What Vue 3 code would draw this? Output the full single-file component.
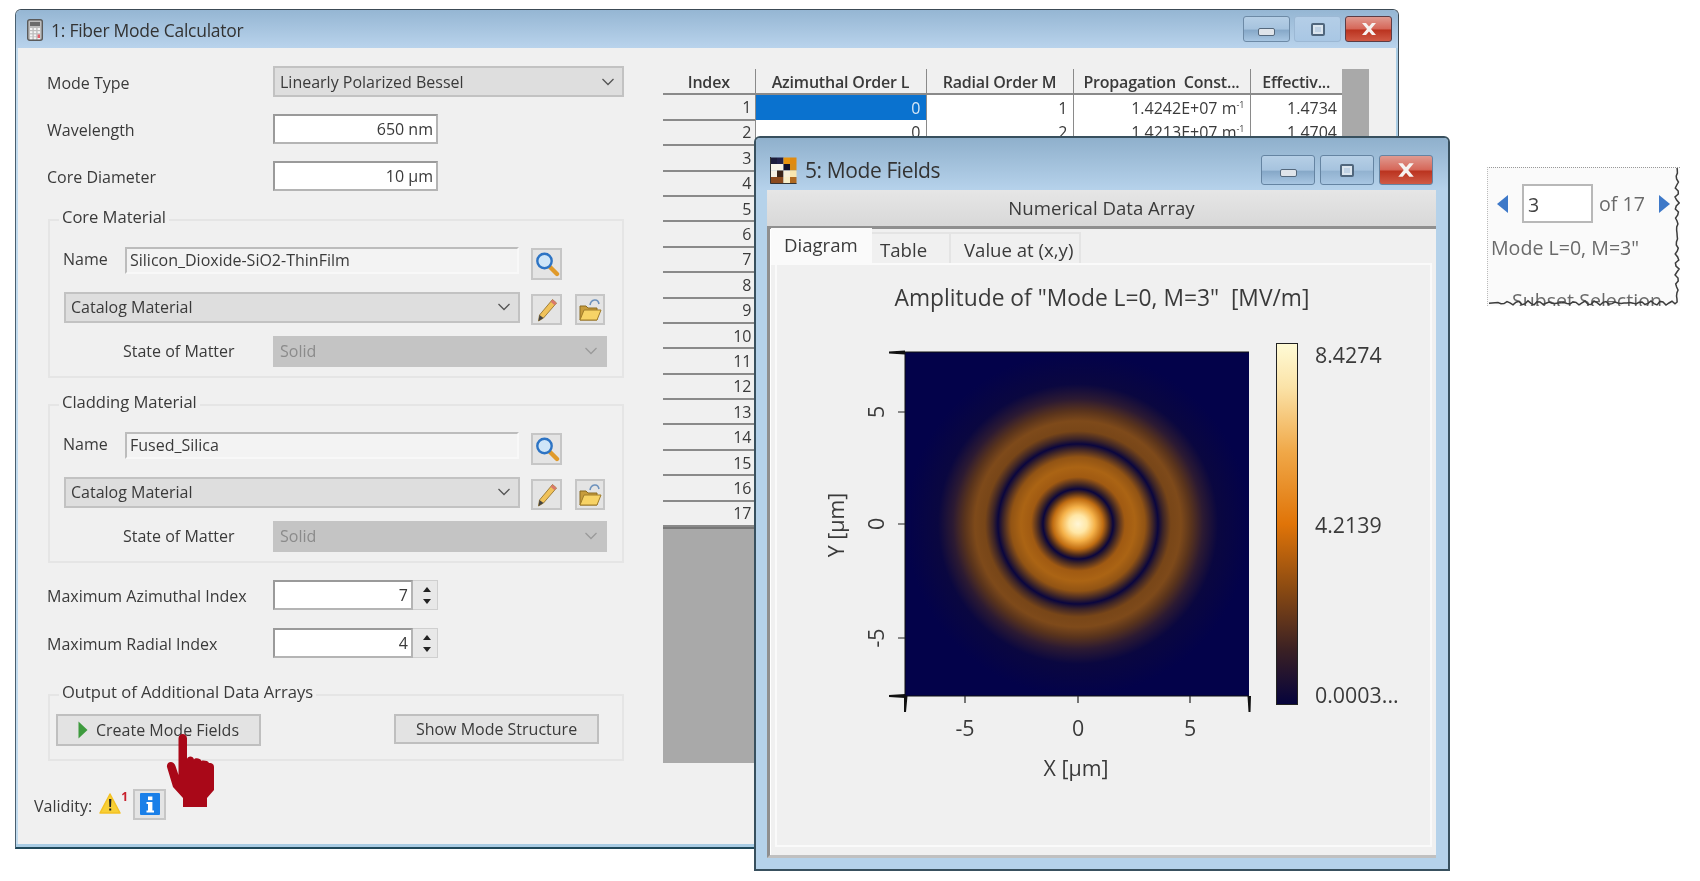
<template>
  <div class="desk">
    <!-- main calculator window -->
    <section class="win calc">
      <header class="titlebar">
        <svg class="calc-icon" width="16" height="22" viewBox="0 0 16 22">
          <rect x="0.7" y="0.7" width="14.6" height="20.6" rx="2" fill="#bdbdbd" stroke="#5a5a5a" stroke-width="1.4" />
          <rect x="3" y="3" width="10" height="4" fill="#6b6b6b" />
          <g fill="#f4f4f4">
            <rect v-for="k in calcKeys" :key="k.x + '-' + k.y" :x="k.x" :y="k.y" width="2.4" height="2" />
          </g>
          <rect x="10.6" y="15.4" width="2.4" height="3.6" fill="#e2606a" />
        </svg>
        <span class="title">1: Fiber Mode Calculator</span>
        <div class="winbtns">
          <button class="wb min"><i class="glyph-min"></i></button>
          <button class="wb max"><i class="glyph-max"></i></button>
          <button class="wb close">
            <svg width="18" height="14" viewBox="0 0 18 14"><path d="M2 1 H6 L9 4.6 L12 1 H16 L11 7 L16 13 H12 L9 9.4 L6 13 H2 L7 7 Z" fill="#f6f2f0" /></svg>
          </button>
        </div>
      </header>
      <div class="calc-body">
        <form class="form" @submit.prevent>
          <div class="row first">
            <label>Mode Type</label>
            <div class="combo wide"><span>Linearly Polarized Bessel</span><svg class="chev" width="14" height="8" viewBox="0 0 14 8"><path d="M1.5 1 L7 6.5 L12.5 1" fill="none" stroke="#555" stroke-width="1.3" /></svg></div>
          </div>
          <div class="row">
            <label>Wavelength</label>
            <div class="num">650 nm</div>
          </div>
          <div class="row">
            <label>Core Diameter</label>
            <div class="num">10 µm</div>
          </div>

          <div v-for="m in materials" :key="m.legend" class="group material">
            <div class="legend">{{ m.legend }}</div>
            <div class="name-row">
              <label>Name</label>
              <div class="name-input">{{ m.name }}</div>
              <button class="ico search">
                <svg width="26" height="26" viewBox="0 0 26 26">
                  <path d="M15 15 L23 23" stroke="#e09a2a" stroke-width="4.4" stroke-linecap="round" />
                  <circle cx="10.5" cy="10" r="7.2" fill="#cfe6f8" stroke="#2d74c4" stroke-width="2.4" />
                </svg>
              </button>
            </div>
            <div class="cat-row">
              <div class="combo cat"><span>Catalog Material</span><svg class="chev" width="14" height="8" viewBox="0 0 14 8"><path d="M1.5 1 L7 6.5 L12.5 1" fill="none" stroke="#555" stroke-width="1.3" /></svg></div>
              <button class="ico pencil">
                <svg width="24" height="26" viewBox="0 0 24 26">
                  <path d="M3.5 24 L4.5 18 L17.5 2.5 L21.5 6 L8.5 21 Z" fill="#f0c25a" stroke="#8a6a24" stroke-width="0.8" />
                  <path d="M3.5 24 L4.5 18 L8.5 21 Z" fill="#444" />
                  <path d="M17.5 2.5 L21.5 6 L19.6 8.2 L15.6 4.8 Z" fill="#d9796c" />
                </svg>
              </button>
              <button class="ico folder">
                <svg width="26" height="26" viewBox="0 0 26 26">
                  <path d="M3 23 V9 H9 L11 11 H20 V23 Z" fill="#c79c3c" stroke="#8b6a20" />
                  <path d="M3 23 L7 13 H24 L20 23 Z" fill="#f7d366" stroke="#a07c28" />
                  <path d="M13 8 C14 2 21 1 22 7" fill="none" stroke="#6d92bd" stroke-width="1.6" />
                </svg>
              </button>
            </div>
            <div class="state-row">
              <label>State of Matter</label>
              <div class="combo off"><span>Solid</span><svg class="chev" width="14" height="8" viewBox="0 0 14 8"><path d="M1.5 1 L7 6.5 L12.5 1" fill="none" stroke="#9a9a9a" stroke-width="1.3" /></svg></div>
            </div>
          </div>

          <div v-for="(s, i) in spinners" :key="s.label" class="row spin-row" :class="{ second: i === 1 }">
            <label>{{ s.label }}</label>
            <div class="num spin-num">{{ s.value }}</div>
            <div class="spin">
              <svg width="10" height="7" viewBox="0 0 10 7"><path d="M5 1 L9 6 H1 Z" fill="#222" /></svg>
              <svg width="10" height="7" viewBox="0 0 10 7"><path d="M5 6 L9 1 H1 Z" fill="#222" /></svg>
            </div>
          </div>

          <div class="group output">
            <div class="legend">Output of Additional Data Arrays</div>
            <button class="btn create">
              <svg width="10" height="18" viewBox="0 0 10 18"><path d="M0.5 0.5 L9.5 9 L0.5 17.5 Z" fill="#3d9a3d" /></svg>
              Create Mode Fields
            </button>
            <button class="btn show">Show Mode Structure</button>
          </div>

          <div class="validity">
            <span>Validity:</span>
            <svg class="warn" width="24" height="24" viewBox="0 0 24 24">
              <path d="M11 3 L21 22 H1 Z" fill="#f8cf35" stroke="#f3c123" stroke-width="1.5" stroke-linejoin="round" />
              <path d="M10 8 H12.4 L12 16 H10.4 Z M10.2 17.4 H12.2 V19.6 H10.2 Z" fill="#222" />
            </svg>
            <sup class="warn-count">1</sup>
            <button class="ico info">
              <svg width="22" height="24" viewBox="0 0 22 24">
                <rect x="1" y="1" width="20" height="22" rx="1" fill="#1a7fe8" />
                <rect x="9" y="4.5" width="4.4" height="3.6" fill="#fff" />
                <path d="M7.5 10 H13.4 V18.5 H15 V20.5 H7.5 V18.5 H9 V12 H7.5 Z" fill="#fff" />
              </svg>
            </button>
          </div>
        </form>

        <div class="grid-wrap">
          <div class="grid">
            <div class="grid-table">
              <table>
                <colgroup>
                  <col v-for="c in columns" :key="c.label" :style="{ width: c.width + 'px' }" />
                </colgroup>
                <thead>
                  <tr><th v-for="c in columns" :key="c.label">{{ c.label }}</th></tr>
                </thead>
                <tbody>
                  <tr v-for="r in rows" :key="r.index">
                    <th>{{ r.index }}</th>
                    <td :class="{ sel: r.index === 1 }">{{ r.l }}</td>
                    <td>{{ r.m }}</td>
                    <td>{{ r.beta }}<sup v-if="r.beta">-1</sup></td>
                    <td>{{ r.neff }}</td>
                  </tr>
                </tbody>
              </table>
              <div class="grid-empty"></div>
            </div>
            <div class="scroll"></div>
          </div>
        </div>
      </div>
    </section>

    <!-- result window, sits over the table -->
    <section class="win fields">
      <header class="titlebar tall">
        <svg class="checker" width="27" height="27" viewBox="0 0 27 27">
          <rect v-for="c in checker" :key="c.x + '-' + c.y" :x="c.x * 6.5 + 0.5" :y="c.y * 6.5 + 0.5" width="6.5" height="6.5" :fill="c.fill" />
          <path d="M0.5 0 V26.5 H26.5" fill="none" stroke="#333" />
        </svg>
        <span class="title big">5: Mode Fields</span>
        <div class="winbtns big">
          <button class="wb min"><i class="glyph-min"></i></button>
          <button class="wb max"><i class="glyph-max"></i></button>
          <button class="wb close">
            <svg width="20" height="16" viewBox="0 0 18 14"><path d="M2 1 H6 L9 4.6 L12 1 H16 L11 7 L16 13 H12 L9 9.4 L6 13 H2 L7 7 Z" fill="#f6f2f0" /></svg>
          </button>
        </div>
      </header>
      <div class="fields-body">
        <div class="band">Numerical Data Array</div>
        <div class="tabs-frame">
          <div class="tabs">
            <div class="tab on">Diagram</div>
            <div class="tab t-table">Table</div>
            <div class="tab t-value">Value at (x,y)</div>
          </div>
          <div class="tab-panel">
            <svg class="plot" width="653" height="580" viewBox="777 265 653 580">
              <defs>
                <radialGradient id="field" gradientUnits="userSpaceOnUse" cx="1078" cy="524" r="172">
                  <stop v-for="s in fieldStops" :key="s.r" :offset="s.r / 172" :stop-color="s.c" />
                </radialGradient>
                <linearGradient id="scale" x1="0" y1="0" x2="0" y2="1">
                  <stop v-for="s in scaleStops" :key="s.o" :offset="s.o" :stop-color="s.c" />
                </linearGradient>
              </defs>
              <text class="t-title" x="1102" y="306" text-anchor="middle">Amplitude of "Mode L=0, M=3"&#160;&#160;[MV/m]</text>
              <rect x="905" y="352" width="344" height="344" fill="url(#field)" />
              <path d="M905 352 H1249 M905 352 V696 H1249" fill="none" stroke="#111" stroke-width="1" />
              <!-- ticks, the corner ones are longer and taper -->
              <g stroke="#222">
                <path v-for="t in xTicks" :key="t.x" :d="`M${t.x} 696 V703`" stroke-width="1.2" />
                <path v-for="t in yTicks" :key="t.y" :d="`M905 ${t.y} H898`" stroke-width="1.2" />
              </g>
              <g fill="#111">
                <path d="M904 696 H907.5 L906 712 H904 Z M1247.5 696 H1251 L1250.5 712 H1248.5 Z" />
                <path d="M905 350.5 V354.5 L889 353.5 V351.5 Z M905 694 V698 L889 697 V695 Z" />
              </g>
              <g class="t-axis">
                <text x="965" y="736" text-anchor="middle">-5</text>
                <text x="1078" y="736" text-anchor="middle">0</text>
                <text x="1190" y="736" text-anchor="middle">5</text>
                <text x="1076" y="776" text-anchor="middle">X [µm]</text>
                <text transform="translate(884 412) rotate(-90)" text-anchor="middle">5</text>
                <text transform="translate(884 524) rotate(-90)" text-anchor="middle">0</text>
                <text transform="translate(884 638) rotate(-90)" text-anchor="middle">-5</text>
                <text transform="translate(844 525) rotate(-90)" text-anchor="middle">Y [µm]</text>
              </g>
              <rect x="1276.5" y="343.5" width="21" height="361" fill="url(#scale)" stroke="#222" stroke-width="1" />
              <g class="t-axis">
                <text x="1315" y="363">8.4274</text>
                <text x="1315" y="533">4.2139</text>
                <text x="1315" y="703">0.0003...</text>
              </g>
            </svg>
          </div>
        </div>
      </div>
    </section>

    <!-- clipped ribbon piece -->
    <aside class="subset">
      <div class="subset-top">
        <svg width="13" height="20" viewBox="0 0 13 20"><path d="M12 1 V19 L1 10 Z" fill="#3d78c8" /></svg>
        <div class="subset-input">3</div>
        <span>of 17</span>
        <svg class="next" width="13" height="20" viewBox="0 0 13 20"><path d="M1 1 V19 L12 10 Z" fill="#3d78c8" /></svg>
      </div>
      <div class="subset-name">Mode L=0, M=3"</div>
      <div class="subset-cap">Subset Selection</div>
      <svg class="torn" width="193" height="139" viewBox="0 0 193 139">
        <path :d="tornEdge" fill="none" stroke="#3c3c3c" stroke-width="1.5" />
      </svg>
    </aside>

    <!-- pointer over the button -->
    <svg class="hand" width="60" height="80" viewBox="0 0 60 80">
      <path d="M18.5 8.5 C18.5 2.5 27 2.5 27 8.5 L27 29 C27.5 25.5 33.5 25.5 34 29.5 C34.5 27.5 40.5 27.5 41.5 31 C42.5 30 48 30.5 49 33 C53 33 54 35 54 37 L54 60 L47 68 L47 77 L23 77 L23 68 L13 57 L7 37 C6 31.5 13.5 29.5 15.5 36 L18.5 45 Z" fill="#a90818" />
    </svg>
  </div>
</template>

<script setup>
const materials = [
  { legend: 'Core Material', name: 'Silicon_Dioxide-SiO2-ThinFilm' },
  { legend: 'Cladding Material', name: 'Fused_Silica' },
]

const spinners = [
  { label: 'Maximum Azimuthal Index', value: 7 },
  { label: 'Maximum Radial Index', value: 4 },
]

const columns = [
  { label: 'Index', width: 92 },
  { label: 'Azimuthal Order L', width: 171 },
  { label: 'Radial Order M', width: 147 },
  { label: 'Propagation\u00a0 Const...', width: 177 },
  { label: 'Effectiv...', width: 92 },
]

// only the first two rows show, the window covers the others
const rows = Array.from({ length: 17 }, (_, i) => ({ index: i + 1, l: '', m: '', beta: '', neff: '' }))
Object.assign(rows[0], { l: 0, m: 1, beta: '1.4242E+07 m', neff: '1.4734' })
Object.assign(rows[1], { l: 0, m: 2, beta: '1.4213E+07 m', neff: '1.4704' })

const calcKeys = []
for (const y of [9, 12.2, 15.4, 18.2]) {
  for (const x of [3, 6.8, 10.6]) calcKeys.push({ x, y })
}

const checkerFills = [
  ['#1d1d3a', '#23234a', '#e8940e', '#e08a10'],
  ['#f8f4e8', '#f8f4e8', '#12122e', '#d88c18'],
  ['#f4f0e4', '#3a2418', '#f8f0d8', '#f8e6b0'],
  ['#8a4a1e', '#8a4a1e', '#f8eec8', '#b06a22'],
]
const checker = checkerFills.flatMap((row, y) => row.map((fill, x) => ({ x, y, fill })))

// radial profile of the mode amplitude, radius in px
const fieldStops = [
  { r: 0, c: '#fff6d6' },
  { r: 9, c: '#ffe7a6' },
  { r: 17, c: '#f5b24a' },
  { r: 25, c: '#c06d12' },
  { r: 31, c: '#4f2c1c' },
  { r: 35, c: '#0a063e' },
  { r: 39, c: '#3c2426' },
  { r: 47, c: '#a05a12' },
  { r: 57, c: '#ab6414' },
  { r: 67, c: '#925414' },
  { r: 75, c: '#3e2528' },
  { r: 80, c: '#0a063e' },
  { r: 85, c: '#3a2328' },
  { r: 93, c: '#784618' },
  { r: 103, c: '#7e4a1a' },
  { r: 113, c: '#5a341c' },
  { r: 125, c: '#2c1a32' },
  { r: 140, c: '#0a0740' },
  { r: 172, c: '#03024a' },
]

const scaleStops = [
  { o: 0, c: '#fffbd6' },
  { o: 0.12, c: '#fbe3a8' },
  { o: 0.3, c: '#f0a848' },
  { o: 0.5, c: '#e07408' },
  { o: 0.68, c: '#8a4a12' },
  { o: 0.85, c: '#3a2024' },
  { o: 1, c: '#05033c' },
]

const xTicks = [{ x: 965 }, { x: 1078 }, { x: 1190 }]
const yTicks = [{ y: 412 }, { y: 524 }, { y: 638 }]

// right and bottom of the cut-out, jagged like a torn page
const wobble = i => Math.sin(i * 1.7) * 1.2 + Math.sin(i * 4.3) * 1
const tornPoints = []
for (let y = 0, i = 0; y <= 136; y += 3, i++) tornPoints.push(`${190 + wobble(i)} ${y}`)
for (let x = 188, i = 50; x >= 0; x -= 3, i++) tornPoints.push(`${x} ${136 + wobble(i)}`)
const tornEdge = 'M' + tornPoints.join(' L')
</script>

<style>
body {
  background: #fff;
}
</style>

<style scoped>
.desk {
  position: relative;
  width: 1700px;
  height: 881px;
  overflow: hidden;
  background: #fff;
  font-family: "Open Sans", "Noto Sans", sans-serif;
  font-size: 16px;
  color: #3a3a3a;
  filter: blur(0.4px);
}

button {
  font: inherit;
  color: inherit;
  padding: 0;
}

.win {
  position: absolute;
  box-sizing: border-box;
  display: flex;
  flex-direction: column;
  background: #f0f0f0;
  border: 1px solid #3c4a55;
  border-radius: 6px 6px 0 0;
  overflow: hidden;
}

.calc {
  left: 15px;
  top: 9px;
  width: 1384px;
  height: 840px;
  border-left-color: #4a6070;
  border-bottom: 2px solid #20485a;
  box-shadow: inset 0 -3px 0 #a9cce4, inset 2px 0 0 #c3dcef, inset -2px 0 0 #a9cce4;
}

.fields {
  left: 754px;
  top: 136px;
  z-index: 2;
  width: 696px;
  height: 735px;
  padding: 0 12px 11px 11px;
  background: #b5d2ea;
  border-width: 2px;
  border-color: #38505e;
  box-shadow: inset 0 1px 0 #d6e4ee;
}

.titlebar {
  flex: none;
  display: flex;
  align-items: center;
  height: 38px;
  padding: 2px 0 0 11px;
  box-sizing: border-box;
  background: linear-gradient(#95b6d3, #b9d3ec);
}

.titlebar.tall {
  height: 52px;
  margin: 0 -12px 0 -11px;
  padding: 12px 0 0 14px;
  background: linear-gradient(#8fb0cc, #b6d2eb);
}

.calc-icon {
  flex: none;
}

.title {
  margin-left: 8px;
  font-size: 17.5px;
  color: #333;
  letter-spacing: -0.25px;
}

.title.big {
  margin-left: 8px;
  font-size: 21px;
  letter-spacing: -0.4px;
}

.checker {
  flex: none;
}

.winbtns {
  margin-left: auto;
  display: flex;
  gap: 4px;
  padding-right: 6px;
  margin-top: -3px;
}

.winbtns.big {
  gap: 5px;
  padding-right: 15px;
  margin-top: -1px;
}

.wb {
  display: flex;
  align-items: center;
  justify-content: center;
  box-sizing: border-box;
  width: 47px;
  height: 26px;
  border: 1px solid #6d8aa6;
  border-radius: 3px;
  background: linear-gradient(#b6cfe6 0%, #a6c3de 50%, #86a8c8 55%, #a8c6e2 100%);
}

.winbtns.big .wb {
  width: 54px;
  height: 30px;
  border-color: #6584a2;
}

.wb.max {
  background: linear-gradient(#b4cee7, #a9c7e4);
  border-color: #9cb8d4;
}

.winbtns.big .wb.max {
  background: linear-gradient(#b6cfe6 0%, #a6c3de 50%, #92b2d0 55%, #a8c6e2 100%);
  border-color: #6584a2;
}

.wb.close {
  background: linear-gradient(#e09a90 0%, #d6685a 48%, #bb3420 55%, #d05a45 100%);
  border-color: #5c3c44;
}

.glyph-min {
  display: block;
  width: 15px;
  height: 6px;
  margin-top: 6px;
  background: #dfe4ea;
  border: 1px solid #54687c;
  border-radius: 2px;
}

.glyph-max {
  display: block;
  box-sizing: border-box;
  width: 14px;
  height: 13px;
  margin-top: 1px;
  border: 2px solid #50667c;
  border-radius: 2px;
  background: #c0d2e4;
  box-shadow: inset 0 0 0 2px #dbe5ee;
}

.calc-body {
  flex: 1;
  display: flex;
  min-height: 0;
  padding: 18px 2px 0 31px;
}

.form {
  flex: none;
  width: 578px;
}

.row {
  display: flex;
  align-items: center;
  height: 30px;
  margin-top: 17px;
}

.row.first {
  height: 31px;
  margin-top: 0;
}

.row label {
  flex: none;
  width: 226px;
  margin-top: 2px;
}

.combo {
  box-sizing: border-box;
  display: flex;
  align-items: center;
  justify-content: space-between;
  padding: 0 7px 2px 5px;
  background: #dedede;
  border: 2px solid #c2c2c2;
}

.combo.wide {
  width: 351px;
  height: 31px;
  padding-bottom: 0;
}

.num {
  box-sizing: border-box;
  width: 165px;
  height: 100%;
  line-height: 26px;
  padding-right: 3px;
  text-align: right;
  background: #fff;
  border: 2px solid #9a9a9a;
  border-right-color: #b4b4b4;
  border-bottom-color: #b4b4b4;
}

.group {
  position: relative;
  box-sizing: border-box;
  width: 576px;
  margin-left: 1px;
  border: 2px solid #e5e5e5;
}

.legend {
  position: absolute;
  top: -15px;
  left: 9px;
  padding: 0 3px;
  line-height: 22px;
  font-size: 16.6px;
  letter-spacing: -0.05px;
  white-space: nowrap;
  background: #f0f0f0;
}

.material {
  height: 159px;
  margin-top: 28px;
  padding: 26px 0 0 13px;
}

.material + .material {
  margin-top: 26px;
}

.name-row,
.cat-row,
.state-row {
  display: flex;
}

.name-row label {
  flex: none;
  width: 62px;
  line-height: 25px;
}

.name-input {
  box-sizing: border-box;
  width: 394px;
  height: 27px;
  padding-left: 3px;
  line-height: 22px;
  border: 2px solid #f8f8f8;
  border-top-color: #bcbcbc;
  border-left-color: #bcbcbc;
  background: #f3f3f3;
}

.ico {
  box-sizing: border-box;
  display: flex;
  align-items: center;
  justify-content: center;
  width: 31px;
  height: 31px;
  background: #e4e4e4;
  border: 2px solid #c6c6c6;
}

.name-row .ico {
  height: 32px;
  margin: 1px 0 0 12px;
}

.cat-row {
  margin-top: 12px;
  padding-left: 1px;
}

.combo.cat {
  width: 456px;
  height: 31px;
}

.cat-row .pencil {
  margin: 2px 0 0 11px;
}

.cat-row .folder {
  width: 30px;
  margin: 2px 0 0 13px;
}

.state-row {
  align-items: center;
  margin-top: 11px;
}

.state-row label {
  flex: none;
  width: 150px;
  padding-left: 60px;
  margin-top: -2px;
}

.combo.off {
  width: 334px;
  height: 31px;
  color: #8b8b8b;
  background: #c4c4c4;
  border-color: #c4c4c4;
}

.spin-row {
  margin-top: 17px;
}

.spin-row.second {
  margin-top: 18px;
}

.spin-num {
  width: 140px;
}

.spin {
  box-sizing: border-box;
  width: 25px;
  height: 100%;
  display: flex;
  flex-direction: column;
  align-items: center;
  justify-content: center;
  gap: 5px;
  padding-left: 4px;
  background: #e8e8e8;
  border: 1px solid #cfcfcf;
  border-left: none;
}

.output {
  height: 67px;
  margin-top: 36px;
  padding: 18px 0 0 6px;
  display: flex;
  align-items: flex-start;
}

.btn {
  box-sizing: border-box;
  display: flex;
  align-items: center;
  justify-content: center;
  gap: 8px;
  width: 205px;
  height: 32px;
  background: #e3e3e3;
  border: 2px solid #bfbfbf;
}

.btn.show {
  height: 30px;
  margin-left: 133px;
}

.validity {
  display: flex;
  align-items: center;
  margin: 27px 0 0 -13px;
  height: 32px;
}

.validity > span {
  margin-top: 3px;
}

.warn {
  margin: -2px 0 0 7px;
}

.warn-count {
  align-self: flex-start;
  margin: 3px 0 0 -2px;
  font-size: 12px;
  font-weight: 700;
  line-height: 1;
  color: #c8202c;
}

.ico.info {
  width: 33px;
  margin-left: 5px;
}

.grid-wrap {
  flex: none;
  margin-left: 38px;
  padding-top: 3px;
  height: 694px;
}

.grid {
  display: flex;
  height: 100%;
}

.grid-table {
  display: flex;
  flex-direction: column;
  width: 679px;
}

.grid-table table {
  width: 679px;
  table-layout: fixed;
  border-collapse: collapse;
  flex: none;
}

.grid-table th,
.grid-table td {
  box-sizing: border-box;
  height: 25.4px;
  padding: 0 5px;
  text-align: right;
  font-weight: 400;
  line-height: 1;
  white-space: nowrap;
}

thead th {
  font-weight: 600 !important;
  text-align: center !important;
  letter-spacing: -0.2px;
  padding-top: 2px !important;
  border-left: 1px solid #8a8a8a;
  border-bottom: 2px solid #8a8a8a;
}

thead th:first-child {
  border-left: none;
}

tbody th {
  border-bottom: 2px solid #8a8a8a;
  padding-right: 3px !important;
}

tbody td {
  background: #fff;
  border-left: 1px solid #8a8a8a;
}

tbody td.sel {
  background: #0a72cf;
  color: #d8e8f6;
}

tbody sup {
  font-size: 9px;
  line-height: 0;
  vertical-align: 6px;
}

.grid-empty {
  flex: 1;
  background: #a9a9a9;
  border-top: 2px solid #777;
}

.scroll {
  width: 27px;
  height: 100%;
  background: #a9a9a9;
}

.fields-body {
  flex: 1;
  display: flex;
  flex-direction: column;
  min-height: 0;
  background: #f0f0f0;
}

.band {
  flex: none;
  height: 36px;
  line-height: 36px;
  text-align: center;
  font-size: 18.6px;
  background: linear-gradient(#e6e6e6, #d8d8d8);
  border-bottom: 3px solid #8f8f8f;
}

.tabs-frame {
  flex: 1;
  display: flex;
  flex-direction: column;
  min-height: 0;
  padding: 3px 4px 0 1px;
  border-left: 3px solid #8f8f8f;
  border-bottom: 3px solid #c0c0c0;
  background: #f0f0f0;
  box-shadow: inset 1px 0 0 #fff;
}

.tabs {
  flex: none;
  display: flex;
  align-items: flex-end;
  height: 33px;
  font-size: 18.6px;
}

.tab {
  box-sizing: border-box;
  height: 33px;
  padding-left: 8px;
  line-height: 31px;
  border-right: 2px solid #e4e4e4;
  border-top: 2px solid #e4e4e4;
}

.tab.on {
  width: 101px;
  height: 37px;
  padding-left: 13px;
  background: #fafafa;
  border: none;
  line-height: 34px;
}

.t-table {
  width: 79px;
}

.t-value {
  width: 130px;
  padding-left: 13px;
}

.tab-panel {
  flex: 1;
  min-height: 0;
  margin: 0 2px 10px 6px;
  box-shadow: 0 0 0 2px #fafafa;
  background: #f0f0f0;
}

.plot {
  display: block;
}

.t-title {
  font-size: 22.8px;
  fill: #3a3a3a;
  letter-spacing: 0;
}

.t-axis {
  font-size: 21.4px;
  fill: #3a3a3a;
}

.subset {
  position: absolute;
  left: 1487px;
  top: 167px;
  box-sizing: border-box;
  width: 193px;
  height: 139px;
  overflow: hidden;
  background: #fafafa;
  border-top: 1px dotted #999;
  border-left: 1px dotted #bbb;
  font-size: 19.6px;
  color: #6a6a6a;
}

.subset-top {
  display: flex;
  align-items: center;
  height: 39px;
  margin: 16px 0 0 8px;
}

.subset-input {
  box-sizing: border-box;
  width: 71px;
  height: 39px;
  margin-left: 13px;
  padding-left: 4px;
  line-height: 38px;
  color: #444;
  background: #fff;
  border: 2px solid #b8b8b8;
}

.subset-top span {
  margin-left: 6px;
}

.next {
  margin-left: 13px;
}

.subset-name {
  margin: 12px 0 0 3px;
  line-height: 26px;
  white-space: nowrap;
}

.subset-cap {
  margin: 27px 0 0 24px;
  line-height: 26px;
  white-space: nowrap;
}

.torn {
  position: absolute;
  left: -1px;
  top: -1px;
}

.hand {
  position: absolute;
  left: 160px;
  top: 730px;
  z-index: 3;
}
</style>
